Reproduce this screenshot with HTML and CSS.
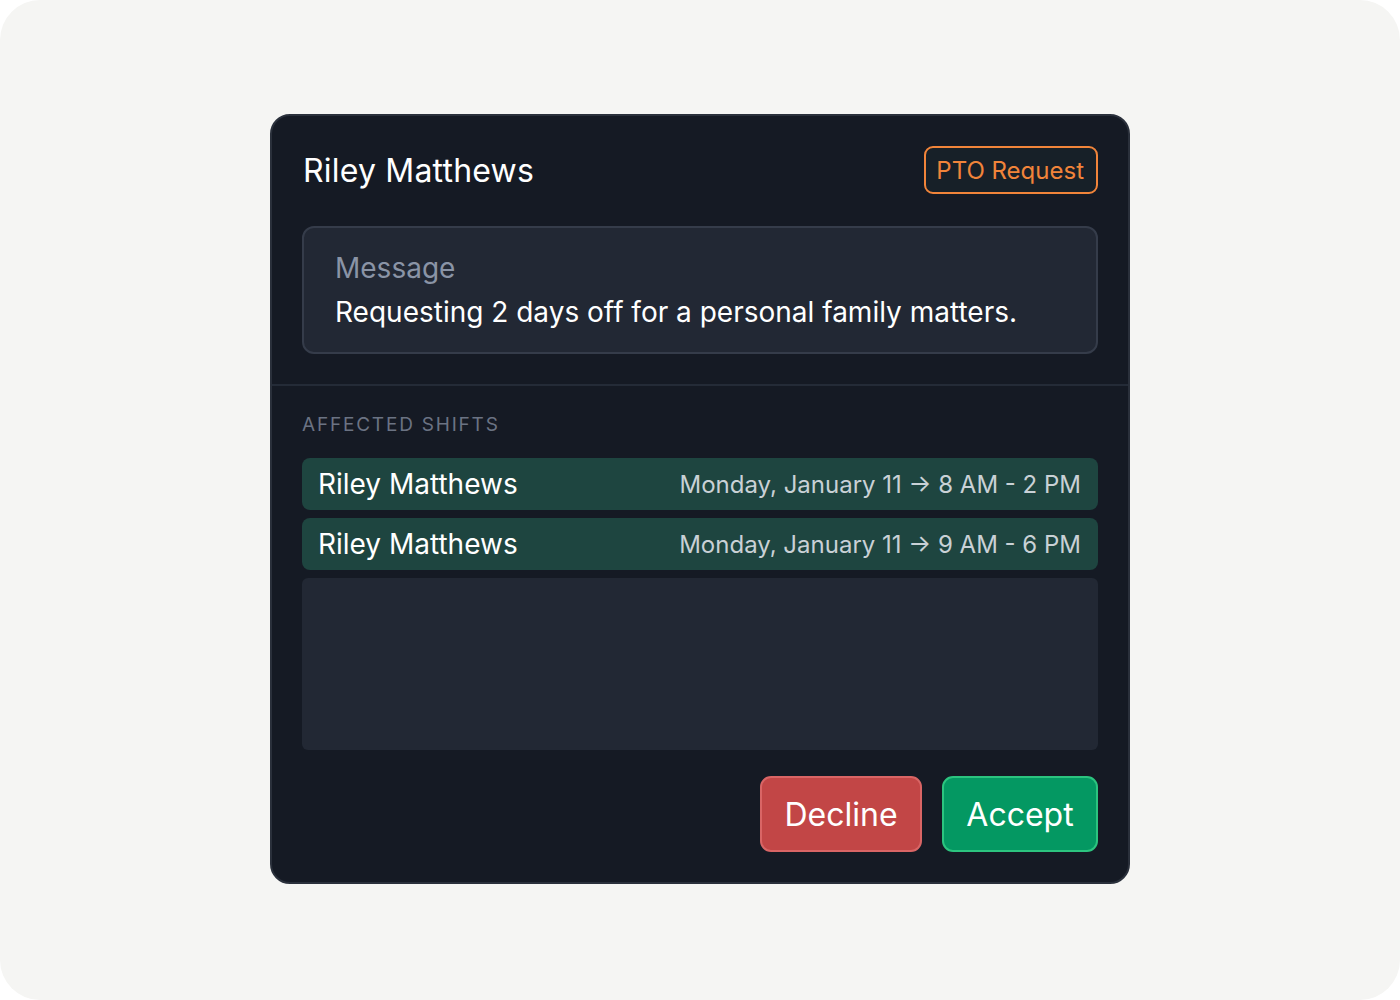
FILE: index.html
```html
<!DOCTYPE html>
<html>
<head>
<meta charset="utf-8">
<link rel="stylesheet" href="styles.css">
</head>
<body>
<div class="canvas">
  <div class="card">
    <div class="top">
      <div class="header">
        <div class="name">Riley Matthews</div>
        <div class="badge">PTO Request</div>
      </div>
      <div class="message">
        <div class="msg-label">Message</div>
        <div class="msg-body">Requesting 2 days off for a personal family matters.</div>
      </div>
    </div>
    <div class="bottom">
      <div class="section-label">AFFECTED SHIFTS</div>
      <div class="shifts">
        <div class="shift">
          <span class="shift-name">Riley Matthews</span>
          <span class="shift-time">Monday, January 11 → 8 AM - 2 PM</span>
        </div>
        <div class="shift">
          <span class="shift-name">Riley Matthews</span>
          <span class="shift-time">Monday, January 11 → 9 AM - 6 PM</span>
        </div>
        <div class="empty"></div>
      </div>
      <div class="actions">
        <button class="btn decline">Decline</button>
        <button class="btn accept">Accept</button>
      </div>
    </div>
  </div>
</div>
</body>
</html>
```

FILE: styles.css
```css
* { box-sizing: border-box; }
html, body { margin: 0; padding: 0; background: #ffffff; }
body { font-family: Inter, "Noto Sans", sans-serif; }
.canvas {
  width: 1400px;
  height: 1000px;
  background: #f5f5f3;
  border-radius: 40px;
  display: flex;
  align-items: flex-start;
  justify-content: center;
  padding-top: 114px;
}
.card {
  width: 860px;
  background: #151a24;
  border: 2px solid #2a303b;
  border-radius: 20px;
  overflow: hidden;
}
.top { padding: 30px 30px 30px; }
.header {
  display: flex;
  align-items: center;
  justify-content: space-between;
  height: 48px;
  margin-bottom: 32px;
}
.name { color: #ffffff; font-size: 32px; letter-spacing: 0.2px; padding-left: 1px; }
.badge {
  height: 48px;
  padding: 0 12px 0 10px;
  display: flex;
  align-items: center;
  border: 2px solid #f1843a;
  border-radius: 9px;
  color: #f1843a;
  font-size: 24px;
  background: #172028;
}
.message {
  background: #222834;
  border: 2px solid #353c4a;
  border-radius: 12px;
  padding: 22px 31px;
}
.msg-label { color: #8a94a6; font-size: 28px; line-height: 36px; margin-bottom: 8px; }
.msg-body { color: #ffffff; font-size: 28px; line-height: 36px; }
.bottom {
  border-top: 2px solid #242b37;
  padding: 28px 30px 30px;
}
.section-label {
  color: #6b7383;
  font-size: 19px;
  line-height: 22px;
  letter-spacing: 1.8px;
  margin-bottom: 22px;
}
.shifts { display: flex; flex-direction: column; gap: 8px; }
.shift {
  height: 52px;
  background: #1e4540;
  border-radius: 8px;
  display: flex;
  align-items: center;
  justify-content: space-between;
  padding: 0 17px 0 16px;
}
.shift-name { color: #ffffff; font-size: 28px; }
.shift-time { color: #c9d1d6; font-size: 24px; }
.empty {
  height: 172px;
  background: #222834;
  border-radius: 6px;
}
.actions {
  display: flex;
  justify-content: flex-end;
  gap: 20px;
  margin-top: 26px;
}
.btn {
  height: 76px;
  font-family: Inter, "Noto Sans", sans-serif;
  font-size: 32px;
  color: #ffffff;
  border-radius: 11px;
  cursor: pointer;
}
.decline { width: 162px; padding: 0; background: #c24646; border: 2px solid #d96565; }
.accept { width: 156px; padding: 0; background: #049862; border: 2px solid #2cc47f; }
```
